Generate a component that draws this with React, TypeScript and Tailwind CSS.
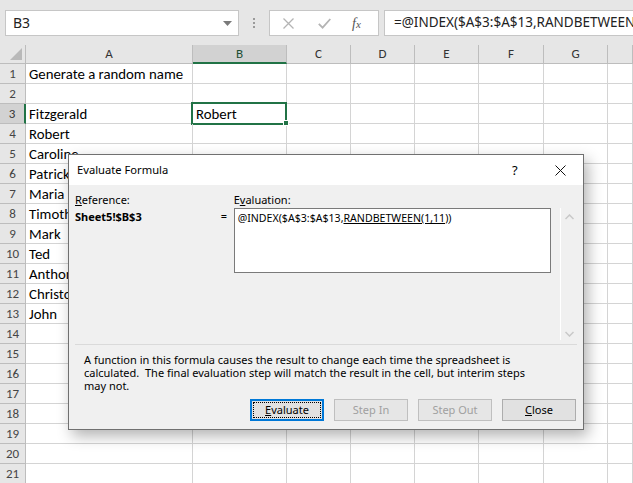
import React from "react";

const COLS = ["A", "B", "C", "D", "E", "F", "G", ""];
const cellText: Record<number, string> = {
  1: "Generate a random name",
  3: "Fitzgerald",
  4: "Robert",
  5: "Caroline",
  6: "Patrick",
  7: "Maria",
  8: "Timothy",
  9: "Mark",
  10: "Ted",
  11: "Anthony",
  12: "Christopher",
  13: "John",
};

function Toolbar() {
  return (
    <div className="flex h-[45px] items-center bg-[#e6e6e6] pl-[5px]">
      <div className="relative flex h-[26px] w-[234px] items-center border border-[#c6c6c6] bg-white pl-[7px] text-[14px] text-[#222]">
        B3
        <svg className="absolute right-[6px] top-[10px]" width="9" height="5" viewBox="0 0 9 5">
          <path d="M0 0 L9 0 L4.5 5 Z" fill="#7a7a7a" />
        </svg>
      </div>
      <div className="flex w-[30px] flex-col items-center justify-center gap-[2px]">
        <span className="h-[2px] w-[2px] bg-[#9a9a9a]" />
        <span className="h-[2px] w-[2px] bg-[#9a9a9a]" />
        <span className="h-[2px] w-[2px] bg-[#9a9a9a]" />
      </div>
      <div className="relative h-[26px] w-[110px] border border-[#c6c6c6] bg-white">
        <svg className="absolute left-[13px] top-[7px]" width="11" height="11" viewBox="0 0 11 11">
          <path d="M0.5 0.5 L10.5 10.5 M10.5 0.5 L0.5 10.5" stroke="#b4b4b4" strokeWidth="1.3" />
        </svg>
        <svg className="absolute left-[48px] top-[7px]" width="13" height="11" viewBox="0 0 13 11">
          <path d="M0.8 5.8 L4.6 9.6 L12.3 1" stroke="#b4b4b4" strokeWidth="1.8" fill="none" />
        </svg>
        <span className="absolute left-[82px] top-[2px] text-[14px] italic text-[#555]" style={{ fontFamily: '"Liberation Serif", serif' }}>
          f<span className="text-[11px]">x</span>
        </span>
      </div>
      <div className="ml-[5px] flex h-[26px] min-w-0 flex-1 items-center overflow-hidden whitespace-nowrap border border-r-0 border-[#c6c6c6] bg-white pl-[9px] text-[13.5px] text-[#222]">
        =@INDEX($A$3:$A$13,RANDBETWEEN(1,11))
      </div>
    </div>
  );
}

function Grid() {
  const rows = Array.from({ length: 21 }, (_, i) => i + 1);
  return (
    <div
      className="grid grid-cols-[26px_167px_94px_64px_64px_64px_65px_64px_1fr] text-[14.8px] text-black"
      style={{ fontFamily: '"Carlito", "Noto Sans", sans-serif' }}
    >
      <div className="relative h-[19px] border-b border-r border-[#bdbdbd] bg-[#e6e6e6]">
        <svg className="absolute bottom-[3px] right-[3px]" width="12" height="12" viewBox="0 0 12 12">
          <path d="M12 0 L12 12 L0 12 Z" fill="#b9b9b9" />
        </svg>
      </div>
      {COLS.map((c) =>
        c === "B" ? (
          <div key="B" className="flex h-[19px] items-center justify-center border-b-2 border-r border-b-[#217346] border-r-[#bdbdbd] bg-[#d2d2d2] text-[13px] text-[#1e4e34]">
            B
          </div>
        ) : (
          <div key={c || "x"} className="flex h-[19px] items-center justify-center border-b border-r border-[#bdbdbd] bg-[#e6e6e6] text-[13px] text-[#333]">
            {c}
          </div>
        )
      )}
      {rows.map((r) => (
        <React.Fragment key={r}>
          <div
            className={
              r === 3
                ? "flex h-[20px] items-center justify-center border-b border-r-2 border-b-[#bdbdbd] border-r-[#217346] bg-[#d2d2d2] text-[13px] text-[#333]"
                : "flex h-[20px] items-center justify-center border-b border-r border-[#bdbdbd] bg-[#e6e6e6] text-[13px] text-[#444]"
            }
          >
            {r}
          </div>
          <div className="relative h-[20px] whitespace-nowrap border-b border-r border-[#d4d4d4] pl-[3px] leading-[20px]">
            {cellText[r] ?? ""}
          </div>
          <div className="relative h-[20px] border-b border-r border-[#d4d4d4] pl-[3px] leading-[20px]">
            {r === 3 && (
              <>
                <span className="relative z-10">Robert</span>
                <div className="absolute -left-[2px] -top-[2px] h-[23px] w-[96px] border-2 border-[#217346]" />
                <div className="absolute -bottom-[3px] -right-[3px] z-10 h-[6px] w-[6px] border border-white bg-[#217346]" />
              </>
            )}
          </div>
          {[0, 1, 2, 3, 4, 5].map((k) => (
            <div key={k} className="h-[20px] border-b border-r border-[#d4d4d4]" />
          ))}
        </React.Fragment>
      ))}
    </div>
  );
}

function Btn({ label, u, state }: { label: string; u?: string; state: "focus" | "disabled" | "normal" }) {
  const content = u ? (
    <>
      <span className="underline">{u}</span>
      {label.slice(1)}
    </>
  ) : (
    label
  );
  if (state === "focus")
    return (
      <div className="flex h-[22px] w-[74px] items-center justify-center border-2 border-[#0078d7] bg-[#e1e1e1] p-[1px]">
        <div className="flex h-full w-full items-center justify-center border border-dotted border-black text-black">{content}</div>
      </div>
    );
  if (state === "disabled")
    return (
      <div className="flex h-[22px] w-[74px] items-center justify-center border border-[#bfbfbf] bg-[#e6e6e6] text-[#a0a0a0]">
        {content}
      </div>
    );
  return (
    <div className="flex h-[22px] w-[74px] items-center justify-center border border-[#adadad] bg-[#e1e1e1] text-black">
      {content}
    </div>
  );
}

function Dialog() {
  return (
    <div
      className="absolute left-[68px] top-[154px] flex h-[276px] w-[516px] flex-col border border-[#707070] bg-[#f0f0f0] text-[11px] text-black shadow-[4px_6px_14px_rgba(0,0,0,0.3)]"
      style={{ fontFamily: '"Noto Sans", "Open Sans", sans-serif' }}
    >
      <div className="relative flex h-[30px] items-center bg-white pl-[8px] text-[11.2px]">
        Evaluate Formula
        <span className="absolute left-[443px] top-[6px] text-[13px]">?</span>
        <svg className="absolute left-[486px] top-[10px]" width="11" height="11" viewBox="0 0 11 11">
          <path d="M0.5 0.5 L10.5 10.5 M10.5 0.5 L0.5 10.5" stroke="#111" strokeWidth="1" />
        </svg>
      </div>
      <div className="flex flex-1 flex-col px-[6px] pt-[7px]">
        <div className="flex">
          <div className="flex w-[146px] flex-col leading-[15px]">
            <span>
              <span className="underline">R</span>eference:
            </span>
            <span className="mt-[2px] font-bold">Sheet5!$B$3</span>
          </div>
          <div className="w-[13px] pt-[16px] leading-[15px]">=</div>
          <div className="flex w-[318px] flex-col">
            <span className="mb-[1px] leading-[15px]">
              E<span className="underline">v</span>aluation:
            </span>
            <div className="h-[65px] border border-[#7a7a7a] bg-white px-[3px] pt-[2px] text-[10.6px] leading-[15px]">
              @INDEX($A$3:$A$13,<span className="underline">RANDBETWEEN(1,11)</span>)
            </div>
          </div>
          <div className="ml-[9px] mt-[16px] flex h-[132px] w-[17px] flex-col items-center justify-between border-l border-white pb-[3px] pt-[6px]">
            <svg width="9" height="6" viewBox="0 0 9 6">
              <path d="M0.5 5 L4.5 1 L8.5 5" stroke="#c8c8c8" strokeWidth="1.5" fill="none" />
            </svg>
            <svg width="9" height="6" viewBox="0 0 9 6">
              <path d="M0.5 1 L4.5 5 L8.5 1" stroke="#c8c8c8" strokeWidth="1.5" fill="none" />
            </svg>
          </div>
        </div>
        <div className="mt-[4px] h-px w-[502px] bg-[#dadada]" />
        <div className="mt-[8px] pl-[9px] leading-[13px]">
          A function in this formula causes the result to change each time the spreadsheet is
          <br />
          calculated.&nbsp; The final evaluation step will match the result in the cell, but interim steps
          <br />
          may not.
        </div>
        <div className="mt-[7px] flex justify-end gap-[10px] pr-[1px]">
          <Btn label="Evaluate" u="E" state="focus" />
          <Btn label="Step In" state="disabled" />
          <Btn label="Step Out" state="disabled" />
          <Btn label="Close" u="C" state="normal" />
        </div>
      </div>
    </div>
  );
}

export default function App() {
  return (
    <div className="relative h-[483px] w-[633px] overflow-hidden bg-white" style={{ fontFamily: '"Noto Sans", sans-serif' }}>
      <Toolbar />
      <Grid />
      <Dialog />
    </div>
  );
}
